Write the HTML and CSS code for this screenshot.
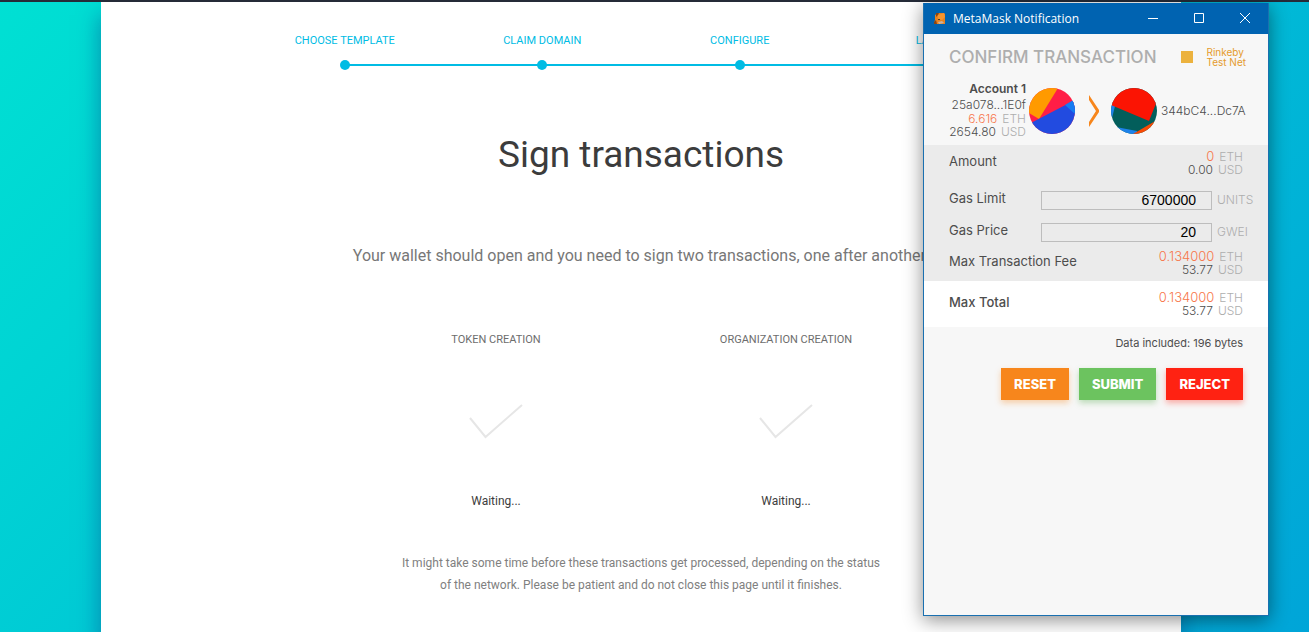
FILE: index.html
```html
<!DOCTYPE html>
<html lang="en">
<head>
<meta charset="utf-8">
<title>Sign transactions</title>
<link rel="stylesheet" href="styles.css">
</head>
<body class="page">
<main class="sheet">
  <ol class="steps">
    <li class="step">Choose template</li>
    <li class="step">Claim domain</li>
    <li class="step">Configure</li>
    <li class="step">Launch</li>
  </ol>
  <h1 class="title">Sign transactions</h1>
  <p class="lead">Your wallet should open and you need to sign two transactions, one after another.</p>
  <div class="tasks">
    <section class="task">
      <h2 class="task-name">Token creation</h2>
      <svg class="tick" viewBox="0 0 54 36" aria-hidden="true"><path d="M1 14 16.500 33 53 1"/></svg>
      <p class="task-state">Waiting...</p>
    </section>
    <section class="task">
      <h2 class="task-name">Organization creation</h2>
      <svg class="tick" viewBox="0 0 54 36" aria-hidden="true"><path d="M1 14 16.500 33 53 1"/></svg>
      <p class="task-state">Waiting...</p>
    </section>
  </div>
  <p class="note">It might take some time before these transactions get processed, depending on the status of the network. Please be patient and do not close this page until it finishes.</p>
</main>

<aside class="wallet" aria-label="MetaMask Notification">
  <header class="bar">
    <svg class="fox" viewBox="0 0 12 13" aria-hidden="true">
      <path fill="#e9821e" d="M1 3 4 1 10 1 11 2 11 9 11 12 0 12 1 8z"/>
      <path fill="#8a4513" d="M2 1 5 1 4 3 2 5zM0 10 2 8 3 12 0 12z"/>
      <path fill="#f6952d" d="M4 3 10 1 11 5 8 8 4 7z"/>
      <path fill="#5b3a22" d="M4 7 6 7 6 8 4 8z"/>
      <path fill="#c9b3a0" d="M4 10 8 9 10 11 5 12z"/>
    </svg>
    <span class="bar-title">MetaMask Notification</span>
    <button class="win" aria-label="Minimize"><svg viewBox="0 0 12 12"><path d="M1 5.500H11"/></svg></button>
    <button class="win" aria-label="Maximize"><svg viewBox="0 0 12 12"><path d="M1.500 .5H10.500V9.500H1.500z"/></svg></button>
    <button class="win" aria-label="Close"><svg viewBox="0 0 12 12"><path d="M1 0 11 10M11 0 1 10"/></svg></button>
  </header>

  <div class="heading">
    <h2 class="heading-text">CONFIRM TRANSACTION</h2>
    <span class="net-mark"></span>
    <span class="net">Rinkeby<br>Test Net</span>
  </div>

  <div class="parties">
    <div class="from">
      <strong class="from-name">Account 1</strong>
      <span class="address">25a078...1E0f</span>
      <span class="money"><span class="balance">6.616</span><span class="unit">ETH</span></span>
      <span class="money">2654.80<span class="unit">USD</span></span>
    </div>
    <svg class="avatar" viewBox="0 0 46 46" aria-hidden="true">
      <clipPath id="a"><circle cx="23" cy="23" r="23"/></clipPath>
      <g clip-path="url(#a)">
        <path fill="#ff1e46" d="M0 0h46v46H0z"/>
        <path fill="#ff9a00" d="M0 0H29L10 31 0 25z"/>
        <path fill="#224be0" d="M0 36 46 12V46H0z"/>
        <path fill="#157cf2" d="M36 17 46 11V26z"/>
      </g>
    </svg>
    <svg class="arrow" viewBox="0 0 12 32" aria-hidden="true"><path fill="#f7861c" d="M2 0 12 15V17L2 32V27L9 16 2 5z"/></svg>
    <svg class="avatar" viewBox="0 0 46 46" aria-hidden="true">
      <clipPath id="b"><circle cx="23" cy="23" r="23"/></clipPath>
      <g clip-path="url(#b)">
        <path fill="#035e5b" d="M0 0h46v46H0z"/>
        <path fill="#1d82ea" d="M0 16 4 18 0 34z"/>
        <path fill="#1d82ea" d="M5 39 26 43V46H5z"/>
        <path fill="#fa4a04" d="M46 32 22 46H40z"/>
        <path fill="#fb1403" d="M0 0H46V13L38 33 0 17z"/>
      </g>
    </svg>
    <span class="address">344bC4...Dc7A</span>
  </div>

  <form class="form" id="tx">
    <div class="row">
      <span class="label">Amount</span>
      <div class="sum">
        <span class="money"><span class="eth">0</span><span class="unit">ETH</span></span>
        <span class="money">0.00<span class="unit">USD</span></span>
      </div>
    </div>
    <div class="gas">
      <label class="label" for="limit">Gas Limit</label>
      <input class="field" id="limit" value="6700000">
      <span class="unit">UNITS</span>
    </div>
    <div class="gas">
      <label class="label" for="price">Gas Price</label>
      <input class="field" id="price" value="20">
      <span class="unit">GWEI</span>
    </div>
    <div class="row">
      <span class="label">Max Transaction Fee</span>
      <div class="sum">
        <span class="money"><span class="eth">0.134000</span><span class="unit">ETH</span></span>
        <span class="money">53.77<span class="unit">USD</span></span>
      </div>
    </div>
  </form>
  <div class="row total">
    <span class="label">Max Total</span>
    <div class="sum">
      <span class="money"><span class="eth">0.134000</span><span class="unit">ETH</span></span>
      <span class="money">53.77<span class="unit">USD</span></span>
    </div>
  </div>
  <p class="data">Data included: 196 bytes</p>
  <div class="actions">
    <button class="action reset" type="reset" form="tx">RESET</button>
    <button class="action submit" type="button">SUBMIT</button>
    <button class="action reject" type="button">REJECT</button>
  </div>
</aside>
</body>
</html>
```
FILE: styles.css
```css
* { box-sizing: border-box; }
h1, h2, p, ol { margin: 0; padding: 0; font-weight: 400; }

.page {
  margin: 0;
  min-height: 100vh;
  display: flex;
  justify-content: center;
  padding-right: 27px;
  border-top: 2px solid #252b38;
  background: linear-gradient(135deg, #00e0d3, #00a5d8);
  font-family: Roboto, sans-serif;
  color: #3c3c3c;
}

.sheet {
  flex: 0 1 1080px;
  display: flex;
  flex-direction: column;
  align-items: center;
  padding: 30px 40px;
  background: #fff;
  box-shadow: 0 15px 20px 2px rgba(10, 90, 150, 0.55);
  text-align: center;
}

.steps {
  display: flex;
  width: 100%;
  max-width: 790px;
  list-style: none;
  color: #00bce4;
  font-size: 11px;
  line-height: 18px;
  text-transform: uppercase;
}
.step {
  flex: 1;
  display: flex;
  flex-direction: column;
  align-items: center;
  gap: 10px;
  background: linear-gradient(#00bce4, #00bce4) 0 32px / 100% 2px no-repeat;
  white-space: nowrap;
}
.step:first-child { background-position: right 32px; background-size: 50% 2px; }
.step:last-child { background-size: 50% 2px; }
.step::after {
  content: "";
  width: 10px;
  height: 10px;
  border-radius: 50%;
  background: #00bce4;
}

.title { margin-top: 60px; font-size: 37px; line-height: 50px; }
.lead { margin-top: 64px; font-size: 16px; line-height: 24px; color: #777; }

.tasks { display: flex; margin-top: 64px; }
.task { width: 290px; display: flex; flex-direction: column; align-items: center; }
.task-name { font-size: 11px; line-height: 16px; color: #6d6d6d; text-transform: uppercase; }
.tick {
  width: 54px;
  height: 36px;
  margin: 56px 0 50px;
  fill: none;
  stroke: #e6e6e6;
  stroke-width: 2;
}
.task-state { font-size: 12px; line-height: 22px; }
.note { max-width: 490px; margin-top: 40px; font-size: 12px; line-height: 22px; color: #808080; }

.wallet {
  position: absolute;
  top: 3px;
  right: 40px;
  bottom: 16px;
  width: 346px;
  border: 1px solid #1a70b0;
  border-top: 0;
  background: #f7f7f7;
  box-shadow: 0 4px 18px rgba(0, 0, 0, 0.45);
  color: #4d4d4d;
  font-family: Inter, sans-serif;
  font-size: 12px;
  line-height: 13px;
}

.bar { display: flex; align-items: center; height: 31px; padding-left: 10px; background: #0063b1; color: #fff; }
.fox { width: 12px; height: 13px; margin-right: 7px; }
.bar-title { flex: 1; font-family: "Open Sans", sans-serif; font-size: 12px; line-height: 16px; }
.win { display: grid; place-items: center; width: 46px; height: 31px; padding: 0; border: 0; background: none; }
.win svg { width: 12px; height: 12px; fill: none; stroke: #fff; }

.heading { display: flex; align-items: center; height: 46px; padding: 0 22px 0 25px; }
.heading-text { flex: 1; font-size: 17px; font-weight: 500; color: #aeaeae; white-space: nowrap; }
.net-mark { width: 12px; height: 12px; margin-right: 13px; background: #ecb23e; }
.net { font-size: 10px; line-height: 10px; color: #e59b2c; }

.parties { display: flex; align-items: center; height: 65px; padding-left: 24px; padding-bottom: 3px; }
.from { display: flex; flex-direction: column; width: 78px; margin-right: 3px; padding-bottom: 4px; align-items: flex-end; }
.from-name { font-weight: 600; line-height: 16px; }
.from .address { line-height: 15px; }
.balance { color: #f7764a; }
.address { font-weight: 300; }
.avatar { width: 46px; height: 46px; }
.arrow { width: 12px; height: 32px; margin: 0 12px; }
.avatar + .address { margin-left: 4px; padding-bottom: 2px; }

.money { display: flex; justify-content: flex-end; gap: 5px; font-weight: 300; }
.eth { color: #f7764a; font-size: 13px; }
.unit { color: #aeaeae; font-weight: 300; }
.label { padding-bottom: 4px; font-size: 13px; }
.form { padding: 5px 0; background: #ebebeb; }
.row { display: flex; justify-content: space-between; align-items: center; padding: 0 25px; }
.row:first-child { margin-bottom: 8px; }
.gas + .row { padding-top: 2px; }
.gas {
  display: grid;
  grid-template-columns: 92px 1fr 41px;
  align-items: center;
  height: 32px;
  padding-right: 15px;
  padding-left: 25px;
}
.gas .unit { padding-bottom: 2px; padding-left: 5px; }
.field {
  width: 100%;
  height: 19px;
  padding: 0 15px;
  border: 1px solid #bdbdbd;
  border-radius: 0;
  background: #ebebeb;
  color: #000;
  font-family: "Liberation Sans", Arial, sans-serif;
  font-size: 14px;
  text-align: right;
}
.total { height: 46px; background: #fff; }
.total .label { font-weight: 500; }
.data { padding: 10px 25px 0; font-size: 11px; text-align: right; }
.actions { display: flex; justify-content: flex-end; gap: 10px; padding: 18px 25px; }
.action {
  height: 32px;
  padding: 0 13px;
  border: 0;
  color: #fff;
  font-family: Inter, sans-serif;
  font-size: 13px;
  font-weight: 800;
}
.reset { background: #f7861c; box-shadow: 0 3px 6px rgba(247, 134, 28, 0.36); }
.submit { background: #6cc35f; box-shadow: 0 3px 6px rgba(80, 170, 70, 0.36); }
.reject { background: #ff2212; box-shadow: 0 3px 6px rgba(255, 34, 18, 0.36); }
```
